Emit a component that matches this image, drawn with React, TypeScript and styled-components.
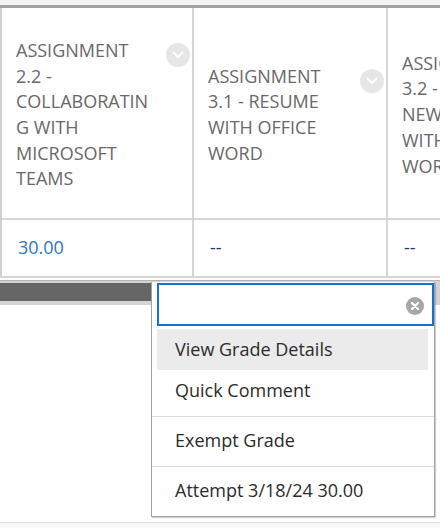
import React from "react";
import styled, { createGlobalStyle } from "styled-components";

const Global = createGlobalStyle`
  html, body { margin: 0; padding: 0; background: #fff; }
  body { font-family: "Open Sans", "Liberation Sans", sans-serif; }
  * { box-sizing: border-box; }
`;

const Page = styled.div`
  position: relative;
  width: 440px;
  height: 528px;
  overflow: hidden;
  background: #fff;
  display: flex;
  flex-direction: column;
`;

const TopStrip = styled.div`
  height: 5px;
  background: #f3f3f3;
  border-bottom: 3px solid #a3a3a3;
  flex: none;
  box-sizing: content-box;
`;

const Table = styled.div`
  display: grid;
  grid-template-columns: 192px 194px 194px;
  grid-template-rows: 212px 56px;
  border-left: 2px solid #d0d0d0;
  border-bottom: 2px solid #d6d6d6;
  width: 580px;
  flex: none;
`;

const HeaderCell = styled.div`
  display: flex;
  align-items: center;
  padding: 4px 2px 0 14px;
  border-right: 2px solid #d6d6d6;
  border-bottom: 2px solid #d6d6d6;
`;

const HeaderInner = styled.div`
  display: flex;
  align-items: flex-start;
  width: 100%;
`;

const HeaderText = styled.div`
  width: 138px;
  flex: none;
  font-size: 18px;
  line-height: 25.7px;
  color: #686868;
  text-transform: uppercase;
  overflow-wrap: anywhere;
`;

const ChevronBtn = styled.div`
  margin-left: auto;
  margin-top: 5px;
  width: 24px;
  height: 24px;
  flex: none;
  border-radius: 50%;
  background: #e6e6e6;
  display: flex;
  align-items: center;
  justify-content: center;
`;

const DataCell = styled.div<{ $link?: boolean }>`
  display: flex;
  align-items: center;
  padding: 0 0 2px 16px;
  border-right: 2px solid #d6d6d6;
  font-size: 18px;
  color: ${(p) => (p.$link ? "#2a78b8" : "#1e3a6a")};
`;

const ScrollGap = styled.div`
  height: 2px;
  flex: none;
`;

const ScrollTrack = styled.div`
  height: 25px;
  flex: none;
  background: #d4d4d4;
  border-top: 1px solid #b4b4b4;
  padding-top: 2px;
`;

const ScrollThumb = styled.div`
  width: 160px;
  height: 18px;
  background: #666;
`;

const Spacer = styled.div`
  flex: 1;
`;

const Footer = styled.div`
  height: 6px;
  flex: none;
  background: #f7f7f7;
  border-top: 1px solid #dcdcdc;
`;

const Menu = styled.div`
  position: absolute;
  left: 151px;
  top: 282px;
  width: 284px;
  height: 235px;
  background: #fff;
  border: 1px solid #a2a2a2;
  border-top: none;
  box-shadow: 1px 1px 1px rgba(0, 0, 0, 0.18);
  padding: 1px 0 0 5px;
  display: flex;
  flex-direction: column;
`;

const SearchBox = styled.div`
  height: 43px;
  border: 2px solid #1572d3;
  display: flex;
  align-items: center;
  justify-content: flex-end;
  padding-right: 8px;
  flex: none;
`;

const ClearIcon = styled.div`
  width: 18px;
  height: 18px;
  border-radius: 50%;
  background: #a6a6a6;
  display: flex;
  align-items: center;
  justify-content: center;
  margin-top: 2px;
`;

const Group = styled.div<{ $last?: boolean }>`
  padding: 3px 0 5px 5px;
  margin-left: -5px;
  border-bottom: ${(p) => (p.$last ? "none" : "1px solid #dedede")};
`;

const Item = styled.div<{ $active?: boolean }>`
  height: 41px;
  margin-right: 6px;
  padding: 0 0 2px 18px;
  display: flex;
  align-items: center;
  font-size: 18px;
  color: #2b2b2b;
  background: ${(p) => (p.$active ? "#ebebeb" : "transparent")};
`;

const Chevron = () => (
  <svg width="12" height="8" viewBox="0 0 12 8">
    <path d="M1.5 1.5 L6 6 L10.5 1.5" fill="none" stroke="#fff" strokeWidth="2" strokeLinecap="round" strokeLinejoin="round" />
  </svg>
);

const headers = [
  "ASSIGNMENT 2.2 - COLLABORATING WITH MICROSOFT TEAMS",
  "ASSIGNMENT 3.1 - RESUME WITH OFFICE WORD",
  "ASSIGNMENT 3.2 - NEWSLETTER WITH WORD\u00A0ONLINE",
];

export default function App() {
  return (
    <Page>
      <Global />
      <TopStrip />
      <Table>
        {headers.map((h, i) => (
          <HeaderCell key={i}>
            <HeaderInner>
              <HeaderText>{h}</HeaderText>
              <ChevronBtn>
                <Chevron />
              </ChevronBtn>
            </HeaderInner>
          </HeaderCell>
        ))}
        <DataCell $link>30.00</DataCell>
        <DataCell>--</DataCell>
        <DataCell>--</DataCell>
      </Table>
      <ScrollGap />
      <ScrollTrack>
        <ScrollThumb />
      </ScrollTrack>
      <Spacer />
      <Footer />
      <Menu>
        <SearchBox>
          <ClearIcon>
            <svg width="10" height="10" viewBox="0 0 10 10">
              <path d="M2 2 L8 8 M8 2 L2 8" stroke="#fff" strokeWidth="2.2" strokeLinecap="round" />
            </svg>
          </ClearIcon>
        </SearchBox>
        <Group>
          <Item $active>View Grade Details</Item>
          <Item>Quick Comment</Item>
        </Group>
        <Group>
          <Item>Exempt Grade</Item>
        </Group>
        <Group $last>
          <Item>Attempt 3/18/24 30.00</Item>
        </Group>
      </Menu>
    </Page>
  );
}
